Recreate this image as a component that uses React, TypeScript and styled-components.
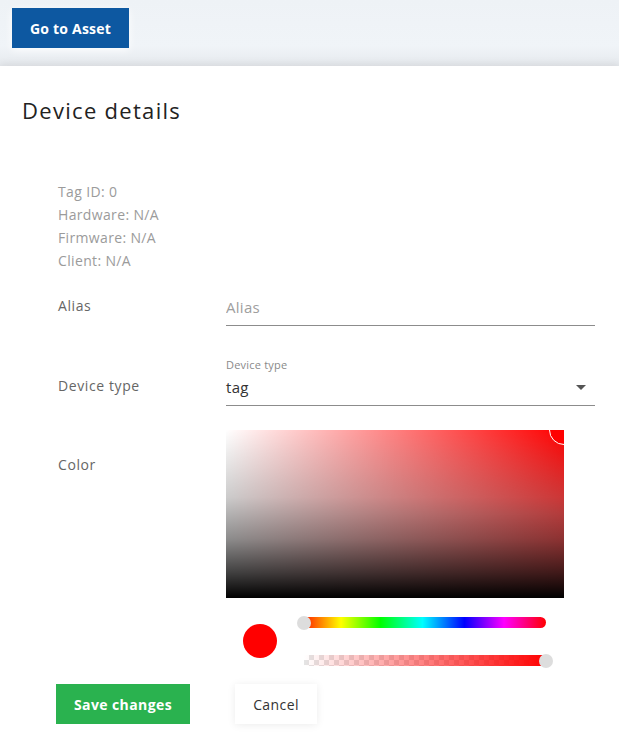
import React, { useState } from "react";
import styled, { createGlobalStyle } from "styled-components";

const GlobalStyle = createGlobalStyle`
  html, body {
    margin: 0;
    padding: 0;
    background: #ffffff;
    font-family: "Open Sans", "Noto Sans", sans-serif;
  }
  * {
    box-sizing: border-box;
  }
`;

const Page = styled.div`
  width: 619px;
  height: 733px;
  overflow: hidden;
  display: flex;
  flex-direction: column;
  background: #eff3f7;
`;

const TopBar = styled.div`
  height: 66px;
  flex: none;
  padding: 8px 12px;
  background: linear-gradient(#eef2f6 0%, #f0f4f8 70%, #e6e9ed 100%);
`;

const PrimaryButton = styled.button`
  height: 40px;
  width: 117px;
  border: none;
  background: #0d58a1;
  color: #ffffff;
  font-family: inherit;
  font-size: 14px;
  font-weight: 700;
  letter-spacing: 0.2px;
  box-shadow: 0 2px 8px rgba(255, 255, 255, 0.9);
  cursor: pointer;
`;

const Panel = styled.div`
  flex: 1;
  background: #ffffff;
  padding: 29px 22px 0;
  box-shadow: 0 -2px 8px rgba(0, 0, 0, 0.07);
`;

const Title = styled.h1`
  margin: 0;
  font-size: 22px;
  line-height: 30px;
  font-weight: 500;
  letter-spacing: 1.3px;
  color: #222222;
`;

const Content = styled.div`
  padding-left: 35px;
  margin-top: 55px;
`;

const InfoList = styled.div`
  display: flex;
  flex-direction: column;
  color: #9b9b9b;
  font-size: 14px;
  line-height: 23px;
  letter-spacing: 0.35px;
  padding-left: 1px;
`;

const Row = styled.div<{ $top: number }>`
  display: grid;
  grid-template-columns: 169px 369px;
  align-items: start;
  margin-top: ${(p) => p.$top}px;
`;

const Label = styled.div<{ $offset: number }>`
  font-size: 14px;
  line-height: 20px;
  letter-spacing: 0.6px;
  color: #666666;
  padding-left: 1px;
  padding-top: ${(p) => p.$offset}px;
`;

const Field = styled.div`
  position: relative;
  display: flex;
  flex-direction: column;
  padding-top: 16px;
`;

const FloatLabel = styled.span`
  position: absolute;
  top: 0;
  left: 0;
  font-size: 11px;
  line-height: 14px;
  letter-spacing: 0.2px;
  color: #8a8a8a;
`;

const TextInput = styled.input`
  border: none;
  border-bottom: 1px solid #8c8c8c;
  outline: none;
  font-family: inherit;
  font-size: 15px;
  line-height: 20px;
  letter-spacing: 0.3px;
  padding: 3px 0 8px;
  color: #333333;
  background: transparent;
  &::placeholder {
    color: #9e9e9e;
  }
`;

const SelectBox = styled.div`
  display: flex;
  align-items: center;
  justify-content: space-between;
  border-bottom: 1px solid #8c8c8c;
  font-size: 15px;
  line-height: 20px;
  letter-spacing: 0.3px;
  padding: 3px 0 8px;
  color: #333333;
  height: 32px;
`;

const ArrowIcon = styled.svg`
  width: 24px;
  height: 24px;
  margin-right: 2px;
  fill: #555555;
`;

const Picker = styled.div`
  width: 338px;
  display: flex;
  flex-direction: column;
`;

const Saturation = styled.div`
  position: relative;
  height: 168px;
  overflow: hidden;
  background: linear-gradient(
      to top,
      #000000 0%,
      rgba(0, 0, 0, 0.75) 15%,
      rgba(0, 0, 0, 0.45) 35%,
      rgba(0, 0, 0, 0.2) 60%,
      rgba(0, 0, 0, 0) 100%
    ),
    linear-gradient(to right, #ffffff, rgba(255, 255, 255, 0)),
    linear-gradient(
      to bottom,
      rgba(255, 255, 255, 0) 0%,
      rgba(255, 255, 255, 0.33) 50%,
      rgba(255, 255, 255, 0.4) 100%
    ),
    #ff0000;
`;

const SatPointer = styled.div`
  position: absolute;
  top: -15px;
  right: -15px;
  width: 30px;
  height: 30px;
  border-radius: 50%;
  border: 1.5px solid #ffffff;
  background: #ff0000;
`;

const Controls = styled.div`
  display: flex;
  height: 72px;
`;

const Swatch = styled.div`
  width: 34px;
  height: 34px;
  border-radius: 50%;
  background: #ff0000;
  margin: 26px 0 0 17px;
  flex: none;
`;

const Sliders = styled.div`
  flex: 1;
  display: flex;
  flex-direction: column;
  gap: 27px;
  padding: 19px 0 0 20px;
  margin-right: 11px;
`;

const Track = styled.div<{ $left: number; $right: number; $kind: "hue" | "alpha" }>`
  position: relative;
  height: 11px;
  margin-left: ${(p) => p.$left}px;
  margin-right: ${(p) => p.$right}px;
  border-radius: ${(p) => (p.$kind === "hue" ? "6px" : "0 6px 6px 0")};
  background: ${(p) =>
    p.$kind === "hue"
      ? "linear-gradient(to right, #ff0000 0%, #ffff00 17%, #00ff00 33%, #00ffff 50%, #0000ff 67%, #ff00ff 83%, #ff0000 100%)"
      : "linear-gradient(to right, rgba(255,0,0,0), #ff0000), repeating-conic-gradient(#e4e4e4 0% 25%, #ffffff 0% 50%) 0 0 / 10px 10px"};
`;

const Thumb = styled.div<{ $at: "start" | "end" }>`
  position: absolute;
  top: -1.5px;
  ${(p) => (p.$at === "start" ? "left: -2px;" : "right: -6px;")}
  width: 14px;
  height: 14px;
  border-radius: 50%;
  background: #dddddd;
`;

const Actions = styled.div`
  display: flex;
  gap: 45px;
  margin-top: 14px;
  margin-left: -1px;
`;

const SaveButton = styled.button`
  width: 134px;
  height: 40px;
  border: none;
  background: #2ab24f;
  color: #ffffff;
  font-family: inherit;
  font-size: 14px;
  font-weight: 700;
  letter-spacing: 0.4px;
  cursor: pointer;
`;

const CancelButton = styled.button`
  width: 82px;
  height: 40px;
  border: none;
  background: #ffffff;
  color: #333333;
  font-family: inherit;
  font-size: 14px;
  font-weight: 500;
  letter-spacing: 0.4px;
  box-shadow: 0 1px 8px rgba(0, 0, 0, 0.08);
  cursor: pointer;
`;

const App: React.FC = () => {
  const [alias, setAlias] = useState("");

  return (
    <>
      <GlobalStyle />
      <Page>
        <TopBar>
          <PrimaryButton>Go to Asset</PrimaryButton>
        </TopBar>
        <Panel>
          <Title>Device details</Title>
          <Content>
            <InfoList>
              <span>Tag ID: 0</span>
              <span>Hardware: N/A</span>
              <span>Firmware: N/A</span>
              <span>Client: N/A</span>
            </InfoList>

            <Row $top={6}>
              <Label $offset={18}>Alias</Label>
              <Field>
                <TextInput
                  placeholder="Alias"
                  value={alias}
                  onChange={(e) => setAlias(e.target.value)}
                />
              </Field>
            </Row>

            <Row $top={32}>
              <Label $offset={18}>Device type</Label>
              <Field>
                <FloatLabel>Device type</FloatLabel>
                <SelectBox>
                  <span>tag</span>
                  <ArrowIcon viewBox="0 0 24 24">
                    <path d="M7 10l5 5 5-5z" />
                  </ArrowIcon>
                </SelectBox>
              </Field>
            </Row>

            <Row $top={24}>
              <Label $offset={25}>Color</Label>
              <Picker>
                <Saturation>
                  <SatPointer />
                </Saturation>
                <Controls>
                  <Swatch />
                  <Sliders>
                    <Track $kind="hue" $left={2} $right={7}>
                      <Thumb $at="start" />
                    </Track>
                    <Track $kind="alpha" $left={7} $right={6}>
                      <Thumb $at="end" />
                    </Track>
                  </Sliders>
                </Controls>
              </Picker>
            </Row>

            <Actions>
              <SaveButton>Save changes</SaveButton>
              <CancelButton>Cancel</CancelButton>
            </Actions>
          </Content>
        </Panel>
      </Page>
    </>
  );
};

export default App;
